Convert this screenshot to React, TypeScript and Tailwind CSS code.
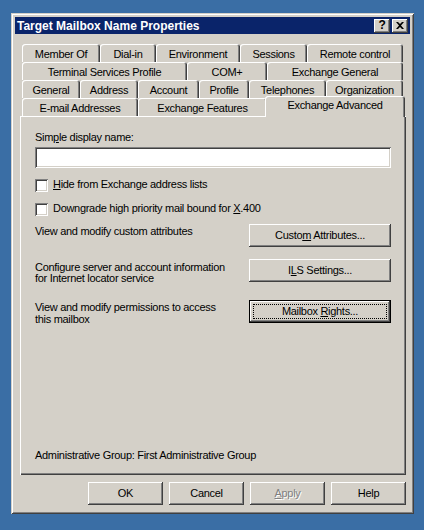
import React from "react";

const raised =
  "shadow-[inset_-1px_-1px_#404040,inset_1px_1px_#ffffff,inset_-2px_-2px_#808080,inset_2px_2px_#d4d0c8]";
const sunken =
  "shadow-[inset_1px_1px_#808080,inset_-1px_-1px_#ffffff,inset_2px_2px_#404040,inset_-2px_-2px_#d4d0c8]";
const frame =
  "shadow-[inset_1px_1px_#d4d0c8,inset_-1px_-1px_#404040,inset_2px_2px_#ffffff,inset_-2px_-2px_#808080]";
const tabEdge = "shadow-[inset_1px_1px_#ffffff,inset_-1px_0_#404040,inset_-2px_0_#808080]";

const rows: { label: string; w: string }[][] = [
  [
    { label: "Member Of", w: "w-[78px]" },
    { label: "Dial-in", w: "w-[56px]" },
    { label: "Environment", w: "w-[84px]" },
    { label: "Sessions", w: "w-[67px]" },
    { label: "Remote control", w: "w-[96px]" },
  ],
  [
    { label: "Terminal Services Profile", w: "w-[165px]" },
    { label: "COM+", w: "w-[80px]" },
    { label: "Exchange General", w: "w-[136px]" },
  ],
  [
    { label: "General", w: "w-[58px]" },
    { label: "Address", w: "w-[58px]" },
    { label: "Account", w: "w-[61px]" },
    { label: "Profile", w: "w-[50px]" },
    { label: "Telephones", w: "w-[77px]" },
    { label: "Organization", w: "w-[77px]" },
  ],
  [
    { label: "E-mail Addresses", w: "w-[116px]" },
    { label: "Exchange Features", w: "w-[129px]" },
  ],
];

function Check({ children }: { children: React.ReactNode }) {
  return (
    <div className="flex items-center h-[13px]">
      <div className={`w-[13px] h-[13px] bg-white shrink-0 ${sunken}`} />
      <span className="ml-[5px] leading-[13px] -mt-[2px]">{children}</span>
    </div>
  );
}

function Btn({ children, w, def, disabled }: { children: React.ReactNode; w: string; def?: boolean; disabled?: boolean }) {
  if (def) {
    return (
      <div className={`${w} h-[23px] shrink-0 border border-black relative flex items-center justify-center ${raised}`}>
        <div className="absolute inset-[3px] border border-dotted border-black" />
        <span className="leading-[13px]">{children}</span>
      </div>
    );
  }
  return (
    <div className={`${w} h-[23px] shrink-0 flex items-center justify-center ${raised}`}>
      <span className={`leading-[13px] ${disabled ? "text-[#808080] [text-shadow:1px_1px_#ffffff]" : ""}`}>{children}</span>
    </div>
  );
}

export default function App() {
  return (
    <div className="w-[424px] h-[530px] bg-[#3a6ea5] pt-[13px] pl-[11px] overflow-hidden font-['Liberation_Sans',Arial,sans-serif] text-[11px] tracking-[-0.3px] text-black">
      <div className={`w-[403px] h-[501px] bg-[#d4d0c8] p-[4px] flex flex-col ${frame}`}>
        {/* Title bar */}
        <div className="h-[17px] bg-[#0a246a] flex items-center pl-[2px] pr-[2px] shrink-0">
          <span className="text-white font-bold text-[12px] tracking-normal leading-[14px] whitespace-nowrap">Target Mailbox Name Properties</span>
          <div className="ml-auto flex gap-[2px]">
            <div className={`w-[16px] h-[14px] bg-[#d4d0c8] flex items-center justify-center ${raised}`}>
              <span className="font-bold text-[12px] leading-[12px] -mt-[1px]">?</span>
            </div>
            <div className={`w-[16px] h-[14px] bg-[#d4d0c8] flex items-center justify-center ${raised}`}>
              <svg width="8" height="7" viewBox="0 0 8 7" className="-mt-[1px]">
                <path d="M0 0h2l2 2 2-2h2L5 3.5 8 7H6L4 5 2 7H0l3-3.5z" fill="#000" />
              </svg>
            </div>
          </div>
        </div>

        {/* Tabs + page */}
        <div className="pl-[5px] pr-[4px] pt-[10px] flex flex-col">
          {rows.map((row, i) => (
            <div key={i} className="flex pl-[2px] h-[18px]">
              {row.map((t) => (
                <div key={t.label} className={`${t.w} h-[18px] shrink-0 rounded-t-[3px] pt-[4px] text-center leading-[13px] whitespace-nowrap ${tabEdge}`}>
                  {t.label}
                </div>
              ))}
              {i === 3 && (
                <div className={`w-[140px] h-[21px] -mt-[2px] -ml-[2px] shrink-0 rounded-t-[3px] pt-[3px] text-center leading-[13px] whitespace-nowrap bg-[#d4d0c8] relative z-10 ${tabEdge}`}>
                  Exchange Advanced
                </div>
              )}
            </div>
          ))}

          <div className="w-[386px] h-[359px] flex flex-col px-[15px] pt-[15px] pb-[13px] shadow-[inset_1px_1px_#ffffff,inset_-1px_-1px_#404040,inset_-2px_-2px_#808080]">
            <div className="leading-[13px]">
              Sim<u>p</u>le display name:
            </div>
            <div className={`mt-[3px] h-[21px] bg-white ${sunken}`} />
            <div className="mt-[11px]">
              <Check>
                <u>H</u>ide from Exchange address lists
              </Check>
            </div>
            <div className="mt-[11px]">
              <Check>
                Downgrade high priority mail bound for <u>X</u>.400
              </Check>
            </div>

            <div className="mt-[8px] flex justify-between">
              <div className="pt-[1px] leading-[13px]">View and modify custom attributes</div>
              <Btn w="w-[142px]">
                Custo<u>m</u> Attributes...
              </Btn>
            </div>
            <div className="mt-[12px] flex justify-between">
              <div className="pt-[3px] leading-[11px]">
                Configure server and account information
                <br />
                for Internet locator service
              </div>
              <Btn w="w-[142px]">
                I<u>L</u>S Settings...
              </Btn>
            </div>
            <div className="mt-[16px] flex justify-between">
              <div className="pt-[1px] leading-[12px]">
                View and modify permissions to access
                <br />
                this mailbox
              </div>
              <Btn w="w-[142px]" def>
                Mailbox <u>R</u>ights...
              </Btn>
            </div>

            <div className="mt-auto leading-[13px]">Administrative Group: First Administrative Group</div>
          </div>

          <div className="mt-[7px] flex justify-end gap-[6px]">
            <Btn w="w-[75px]">OK</Btn>
            <Btn w="w-[75px]">Cancel</Btn>
            <Btn w="w-[75px]" disabled>
              <u>A</u>pply
            </Btn>
            <Btn w="w-[75px]">Help</Btn>
          </div>
        </div>
      </div>
    </div>
  );
}
